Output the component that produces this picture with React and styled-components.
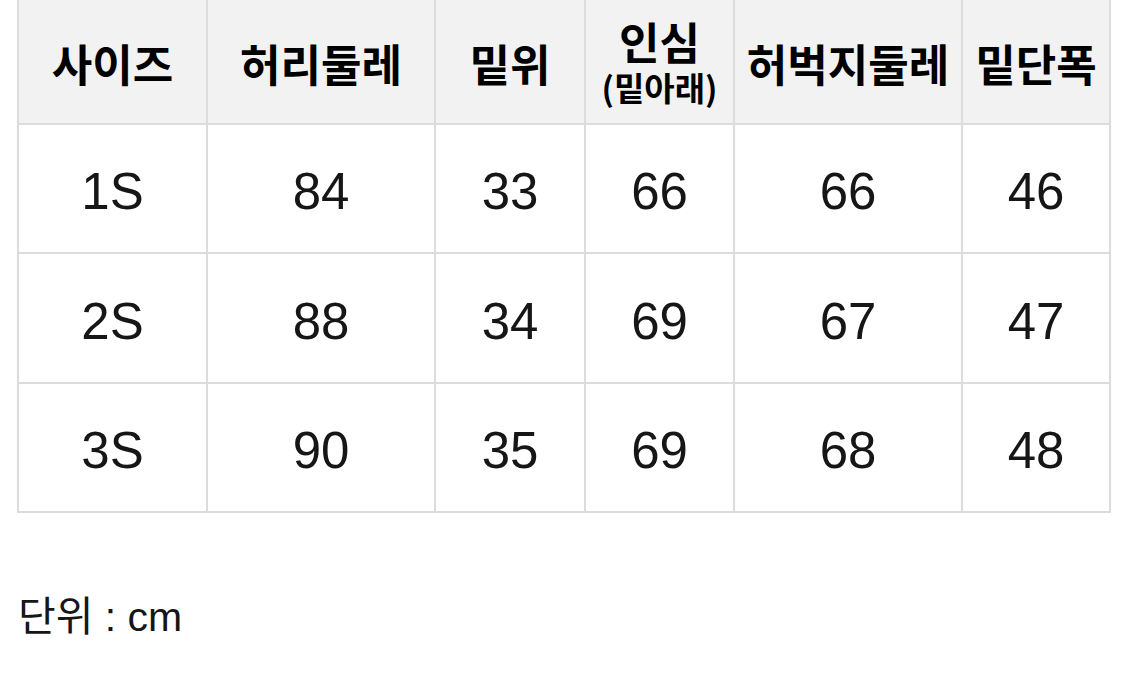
import React from "react";
import styled, { createGlobalStyle } from "styled-components";

const GlobalStyle = createGlobalStyle`
  html, body {
    margin: 0;
    padding: 0;
    background: #ffffff;
  }
  body {
    font-family: "Liberation Sans", "Noto Sans CJK KR", sans-serif;
    color: #111111;
  }
`;

const columns = ["189px", "228px", "150px", "149px", "228px", "148px"];

const headers = [
  { label: "사이즈" },
  { label: "허리둘레" },
  { label: "밑위" },
  { label: "인심", sub: "(밑아래)" },
  { label: "허벅지둘레" },
  { label: "밑단폭" },
];

const rows = [
  ["1S", "84", "33", "66", "66", "46"],
  ["2S", "88", "34", "69", "67", "47"],
  ["3S", "90", "35", "69", "68", "48"],
];

const App = () => {
  return (
    <Page>
      <GlobalStyle />
      <Table>
        {headers.map((h) => (
          <HeadCell key={h.label}>
            <HeadLabel>{h.label}</HeadLabel>
            {h.sub && <HeadSub>{h.sub}</HeadSub>}
          </HeadCell>
        ))}
        {rows.map((row) =>
          row.map((value, i) => <Cell key={row[0] + i}>{value}</Cell>)
        )}
      </Table>
      <Unit>단위 : cm</Unit>
    </Page>
  );
};

export default App;

const Page = styled.div`
  width: 1125px;
  height: 675px;
  overflow: hidden;
  padding: 0 0 0 18px;
  box-sizing: border-box;
`;

const Table = styled.div`
  display: grid;
  grid-template-columns: ${columns.join(" ")};
  grid-template-rows: 125px 129px 130px 129px;
  margin-top: -2px;
  width: max-content;
  border-top: 2px solid #dcdcdc;
  border-left: 2px solid #dcdcdc;
  margin-left: -1px;
`;

const HeadCell = styled.div`
  display: flex;
  flex-direction: column;
  align-items: center;
  justify-content: center;
  background: #f2f2f2;
  border-right: 2px solid #dcdcdc;
  border-bottom: 2px solid #dcdcdc;
  font-family: "Noto Sans CJK KR", sans-serif;
  font-weight: 700;
  color: #000000;
  padding-top: 2px;
`;

const HeadLabel = styled.div`
  font-size: 44px;
  line-height: 48px;
  white-space: nowrap;
`;

const HeadSub = styled.div`
  font-size: 33px;
  line-height: 44px;
  white-space: nowrap;
`;

const Cell = styled.div`
  display: flex;
  align-items: center;
  justify-content: center;
  border-right: 2px solid #dcdcdc;
  border-bottom: 2px solid #dcdcdc;
  font-family: "Liberation Sans", "Noto Sans CJK KR", sans-serif;
  font-size: 51px;
  color: #161616;
  padding-top: 6px;
  box-sizing: border-box;
`;

const Unit = styled.div`
  margin-top: 70px;
  font-family: "Liberation Sans", "Noto Sans CJK KR", sans-serif;
  font-size: 41px;
  color: #161616;
`;
